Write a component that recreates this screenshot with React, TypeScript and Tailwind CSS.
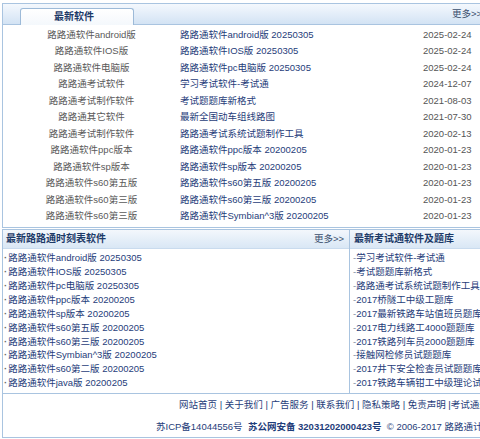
import React from "react";

const softRows: [string, string, string][] = [
  ["路路通软件android版", "路路通软件android版 20250305", "2025-02-24"],
  ["路路通软件IOS版", "路路通软件IOS版 20250305", "2025-02-24"],
  ["路路通软件电脑版", "路路通软件pc电脑版 20250305", "2025-02-24"],
  ["路路通考试软件", "学习考试软件-考试通", "2024-12-07"],
  ["路路通考试制作软件", "考试题题库新格式", "2021-08-03"],
  ["路路通其它软件", "最新全国动车组线路图", "2021-07-30"],
  ["路路通考试制作软件", "路路通考试系统试题制作工具", "2020-02-13"],
  ["路路通软件ppc版本", "路路通软件ppc版本 20200205", "2020-01-23"],
  ["路路通软件sp版本", "路路通软件sp版本 20200205", "2020-01-23"],
  ["路路通软件s60第五版", "路路通软件s60第五版 20200205", "2020-01-23"],
  ["路路通软件s60第三版", "路路通软件s60第三版 20200205", "2020-01-23"],
  ["路路通软件s60第三版", "路路通软件Symbian^3版 20200205", "2020-01-23"],
];

const timetable = [
  "路路通软件android版 20250305",
  "路路通软件IOS版 20250305",
  "路路通软件pc电脑版 20250305",
  "路路通软件ppc版本 20200205",
  "路路通软件sp版本 20200205",
  "路路通软件s60第五版 20200205",
  "路路通软件s60第三版 20200205",
  "路路通软件Symbian^3版 20200205",
  "路路通软件s60第二版 20200205",
  "路路通软件java版 20200205",
];

const exams = [
  "学习考试软件-考试通",
  "考试题题库新格式",
  "路路通考试系统试题制作工具",
  "2017桥隧工中级工题库",
  "2017最新铁路车站值班员题库",
  "2017电力线路工4000题题库",
  "2017铁路列车员2000题题库",
  "接触网检修员试题题库",
  "2017井下安全检查员试题题库",
  "2017铁路车辆钳工中级理论试题",
];

const font = {
  fontFamily:
    '"Liberation Sans", Arial, "Noto Sans CJK SC", sans-serif',
};

export default function App() {
  return (
    <div
      className="w-[480px] h-[439px] overflow-hidden bg-white text-[9.5px] leading-none"
      style={font}
    >
      <div className="w-[600px] pl-[2px] pt-[3px]">
        {/* newest software */}
        <div className="border border-[#a9c4e0]">
          <div className="h-[21px] flex items-end justify-between bg-gradient-to-b from-[#f4f8fd] to-[#d3e3f4] border-b border-[#a9c4e0]">
            <div className="ml-[17px] w-[114px] h-[17px] -mb-px rounded-t-[3px] border border-b-0 border-[#9dbad8] bg-gradient-to-b from-white to-[#f4f8fc] pl-[33px] flex items-center">
              <span className="font-bold text-[10px] text-[#1d3a68]">最新软件</span>
            </div>
            <span className="self-center mr-[117px] text-[9.5px] text-[#3a4f6e]">更多&gt;&gt;</span>
          </div>
          <div className="pb-[3px] pt-px">
            {softRows.map(([a, b, c], i) => (
              <div key={i} className="h-[16.5px] flex items-center">
                <div className="w-[177px] text-center text-[#5a5a5a]">{a}</div>
                <div className="w-[243px] text-[#1f3d7a]">{b}</div>
                <div className="text-[#555]">{c}</div>
              </div>
            ))}
          </div>
        </div>

        {/* lower lists */}
        <div className="mt-px flex border border-[#a9c4e0] border-b-0">
          <div className="w-[347px] border-r border-[#a9c4e0]">
            <div className="h-[19px] flex items-center justify-between bg-gradient-to-b from-[#f3f7fc] to-[#d9e7f5] border-b border-[#c9dbee] pl-[3px] pr-[5px]">
              <span className="font-bold text-[10px] text-[#1d3a68]">最新路路通时刻表软件</span>
              <span className="text-[#3a4f6e]">更多&gt;&gt;</span>
            </div>
            <div className="pt-[2px] pb-[3px]">
              {timetable.map((t, i) => (
                <div key={i} className="h-[13.9px] flex items-center pl-[1px] text-[#1f3d7a]">
                  <span className="text-[#666] font-bold mr-[1px]">·</span>
                  {t}
                </div>
              ))}
            </div>
          </div>
          <div className="flex-1">
            <div className="h-[19px] flex items-center bg-gradient-to-b from-[#f3f7fc] to-[#d9e7f5] border-b border-[#c9dbee] pl-[4px]">
              <span className="font-bold text-[10px] text-[#1d3a68]">最新考试通软件及题库</span>
            </div>
            <div className="pt-[2px] pb-[3px]">
              {exams.map((t, i) => (
                <div key={i} className="h-[13.9px] flex items-center pl-[3px] text-[#1f3d7a] whitespace-nowrap">
                  <span className="text-[#7a8aa0]">-</span>
                  {t}
                </div>
              ))}
            </div>
          </div>
        </div>

        {/* footer */}
        <div className="border border-[#a9c4e0] h-[45px] text-[#333] whitespace-nowrap">
          <div className="h-[22px] flex items-center pl-[176px] text-[#1f3d7a]">
            网站首页 | 关于我们 | 广告服务 | 联系我们 | 隐私策略 | 免责声明 |考试通题库
          </div>
          <div className="h-[22px] flex items-center pl-[153px] text-[#1f3d7a]">
            苏ICP备14044556号&nbsp;&nbsp;<span className="font-bold">苏公网安备 32031202000423号</span>&nbsp;&nbsp;© 2006-2017 路路通计算机软件
          </div>
        </div>
      </div>
    </div>
  );
}
